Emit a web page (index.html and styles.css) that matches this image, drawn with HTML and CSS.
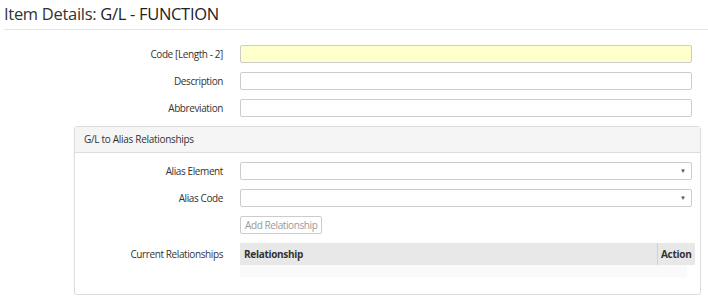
FILE: index.html
```html
<!DOCTYPE html>
<html>
<head>
    <title>Item Details</title>
    <link rel="stylesheet" href="styles.css">
</head>
<body>
    <h1 class="page-title">Item Details: <span class="item-name">G/L - FUNCTION</span></h1>

    <div class="form">
        <div class="form-row">
            <label for="code">Code [Length - 2]</label>
            <input type="text" id="code" class="required">
        </div>
        <div class="form-row">
            <label for="description">Description</label>
            <input type="text" id="description">
        </div>
        <div class="form-row">
            <label for="abbreviation">Abbreviation</label>
            <input type="text" id="abbreviation">
        </div>
    </div>

    <div class="panel">
        <div class="panel-heading">G/L to Alias Relationships</div>
        <div class="panel-body">
            <div class="form-row">
                <label for="alias-element">Alias Element</label>
                <div class="select-box" id="alias-element"><span class="caret">&#9660;</span></div>
            </div>
            <div class="form-row">
                <label for="alias-code">Alias Code</label>
                <div class="select-box" id="alias-code"><span class="caret">&#9660;</span></div>
            </div>
            <div class="form-row">
                <span></span>
                <div class="btn-cell"><button class="btn" disabled>Add Relationship</button></div>
            </div>
            <div class="form-row table-row">
                <label>Current Relationships</label>
                <div class="rel-table">
                    <div class="rel-head">
                        <div class="col-rel">Relationship</div>
                        <div class="col-action">Action</div>
                    </div>
                    <div class="rel-empty"></div>
                </div>
            </div>
        </div>
    </div>
</body>
</html>
```
FILE: styles.css
```css
body {
    margin: 0;
    padding: 0 0 0 4px;
    font-family: 'Open Sans', 'Noto Sans', sans-serif;
    color: #333;
    background: #fff;
}
.page-title {
    margin: 0;
    padding: 4px 0 5px;
    font-size: 16.5px;
    font-weight: 400;
    line-height: 20px;
    letter-spacing: -0.3px;
    border-bottom: 1px solid #e5e5e5;
}
.item-name {
    color: #222;
}
.form {
    padding-top: 15px;
}
.form-row {
    display: grid;
    grid-template-columns: 219px 452px;
    column-gap: 17px;
    align-items: center;
    margin-bottom: 9px;
}
.form-row label {
    text-align: right;
    font-size: 10px;
    letter-spacing: -0.4px;
    color: #333;
}
input, .select-box {
    box-sizing: border-box;
    height: 18px;
    border: 1px solid #ccc;
    border-radius: 2px;
    background: #fff;
    margin: 0;
    padding: 0 4px;
    font-family: inherit;
}
input.required {
    background: #ffffcc;
}
.panel {
    margin: 0 7px 0 70px;
    border: 1px solid #ddd;
    border-radius: 3px;
    box-shadow: 0 1px 2px rgba(0, 0, 0, 0.06);
}
.panel-heading {
    height: 25px;
    line-height: 25px;
    padding-left: 9px;
    background: #f5f5f5;
    border-bottom: 1px solid #ddd;
    font-size: 10px;
    letter-spacing: -0.3px;
}
.panel-body {
    padding: 9px 0 17px;
}
.panel .form-row {
    grid-template-columns: 148px 452px;
}
.select-box {
    display: flex;
    justify-content: flex-end;
    align-items: center;
}
.caret {
    font-size: 6px;
    color: #555;
    margin-right: 1px;
}
.btn-cell {
    display: flex;
}
.btn {
    display: block;
    height: 18px;
    line-height: 16px;
    padding: 0 4px;
    border: 1px solid #ccc;
    border-radius: 2px;
    background: #fff;
    color: #999;
    font-family: inherit;
    font-size: 10px;
    letter-spacing: -0.4px;
}
.table-row {
    align-items: start;
    margin-bottom: 0;
}
.table-row label {
    line-height: 22px;
}
.rel-table {
    width: 455px;
}
.rel-head {
    display: flex;
    height: 22px;
    line-height: 22px;
    background: #e8e8e8;
    font-size: 10px;
    font-weight: 700;
    letter-spacing: -0.3px;
}
.col-rel {
    flex: 1;
    padding-left: 4px;
}
.col-action {
    width: 34px;
    padding-left: 3px;
    border-left: 1px solid #d0d0d0;
}
.rel-empty {
    width: 447px;
    height: 12px;
    background: #fafafa;
}
```
